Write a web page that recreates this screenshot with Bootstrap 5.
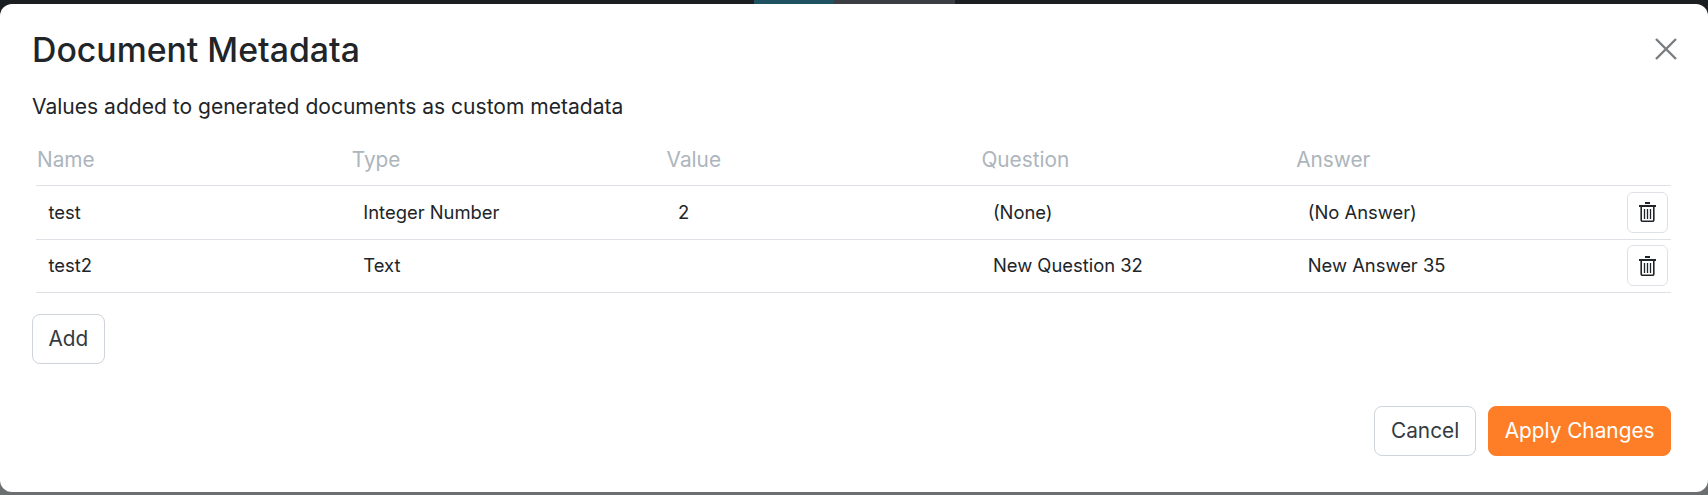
<!DOCTYPE html>
<html lang="en">
<head>
<meta charset="utf-8">
<title>Document Metadata</title>
<link href="https://cdn.jsdelivr.net/npm/bootstrap@5.3.0/dist/css/bootstrap.min.css" rel="stylesheet">
<style>
html, body { height: 495px; overflow: hidden; }
body { background: linear-gradient(#1b1f22 0, #1b1f22 480px, #6b6f70 480px); font-family: Inter, "Liberation Sans", sans-serif; color: #212529; }
.backdrop-tabs { height: 4px; padding-left: 754px; overflow: hidden; }
.bg-tab { height: 4px; display: block; }
.tab-form { width: 80px; background: #1e5261; }
.tab-work { width: 121px; background: #3a3d41; }
.sheet { height: 488px; border: 0; border-radius: 12px; padding: 0 32px; background: #fff; }
.sheet-title { font-size: 33.8px; font-weight: 500; line-height: 38px; margin: 0; }
.sheet-head { padding: 27px 0 0; height: 89px; }
.x-btn { background: none; border: 0; padding: 0; width: 24px; height: 24px; margin: 6px -2px 0 0; color: #7a7d80; line-height: 0; }
.lede { font-size: 21.05px; line-height: 27px; margin: 0 0 26px; height: 27px; }
.meta-table { table-layout: fixed; width: 1635px; margin: 0 0 0 4px; font-size: 18.4px; }
.meta-table th { font-weight: 400; font-size: 20.8px; color: #adb5bd; padding: 0 5px 12px 1px; line-height: 27px; border-bottom: 1px solid #dee2e6; }
.meta-table td { padding: 0 0 0 12.500px; height: 53.500px; vertical-align: middle; border-bottom: 1px solid #dee2e6; line-height: 27px; color: #212529; }
.meta-table td.act { padding: 0 3px 0 0; text-align: right; }
.col-data { width: 314.800px; }
.trash-btn { width: 41px; height: 41px; padding: 0; border: 1px solid #dee2e6; border-radius: 6px; background: #fff; line-height: 0; display: inline-flex; align-items: center; justify-content: center; }
.plain-btn { font-size: 20.8px; line-height: 30px; padding: 9px 15.500px; border: 1px solid #ced4da; border-radius: 8px; background: #fff; color: #343a40; }
.cancel-wide { padding: 9px 16px; }
.orange-btn { font-size: 20.8px; line-height: 30px; padding: 9px 15.500px; border: 1px solid #fd7e26; border-radius: 8px; background: #fd7e26; color: #fff; }
.foot-row { padding-top: 42px; padding-right: 5px; }
.add-row { padding-top: 21px; }
</style>
</head>
<body>
<div class="backdrop-tabs d-flex"><span class="bg-tab tab-form"></span><span class="bg-tab tab-work"></span></div>
<div class="modal-content sheet">
  <div class="sheet-head d-flex justify-content-between align-items-start">
    <h2 class="sheet-title">Document Metadata</h2>
    <button class="x-btn" type="button" aria-label="Close">
      <svg width="24" height="24" viewBox="0 0 24 24" fill="none" stroke="currentColor" stroke-width="2.4"><path d="M2 2 22 22M22 2 2 22"/></svg>
    </button>
  </div>
  <p class="lede">Values added to generated documents as custom metadata</p>
  <table class="meta-table">
    <colgroup><col class="col-data"><col class="col-data"><col class="col-data"><col class="col-data"><col class="col-data"><col></colgroup>
    <thead><tr><th>Name</th><th>Type</th><th>Value</th><th>Question</th><th>Answer</th><th></th></tr></thead>
    <tbody>
      <tr><td>test</td><td>Integer Number</td><td>2</td><td>(None)</td><td>(No Answer)</td>
        <td class="act"><button class="trash-btn" type="button" aria-label="Delete"><svg width="17" height="20" viewBox="0 0 17 20" fill="none" stroke="#212529"><path stroke-width="2" d="M0 4h17M6 1h5"/><path stroke-width="1.600" d="M2.200 4.500V18a1.300 1.300 0 0 0 1.300 1.300h10a1.300 1.300 0 0 0 1.300-1.300V4.500"/><path stroke-width="1.300" d="M5.500 7v10M8.500 7v10M11.500 7v10"/></svg></button></td></tr>
      <tr><td>test2</td><td>Text</td><td></td><td>New Question 32</td><td>New Answer 35</td>
        <td class="act"><button class="trash-btn" type="button" aria-label="Delete"><svg width="17" height="20" viewBox="0 0 17 20" fill="none" stroke="#212529"><path stroke-width="2" d="M0 4h17M6 1h5"/><path stroke-width="1.600" d="M2.200 4.500V18a1.300 1.300 0 0 0 1.300 1.300h10a1.300 1.300 0 0 0 1.300-1.300V4.500"/><path stroke-width="1.300" d="M5.500 7v10M8.500 7v10M11.500 7v10"/></svg></button></td></tr>
    </tbody>
  </table>
  <div class="add-row"><button class="plain-btn" type="button">Add</button></div>
  <div class="foot-row d-flex justify-content-end gap-2">
    <button class="plain-btn cancel-wide" type="button">Cancel</button>
    <button class="orange-btn ms-1" type="button">Apply Changes</button>
  </div>
</div>
<script src="https://cdn.jsdelivr.net/npm/bootstrap@5.3.0/dist/js/bootstrap.bundle.min.js"></script>
</body>
</html>
